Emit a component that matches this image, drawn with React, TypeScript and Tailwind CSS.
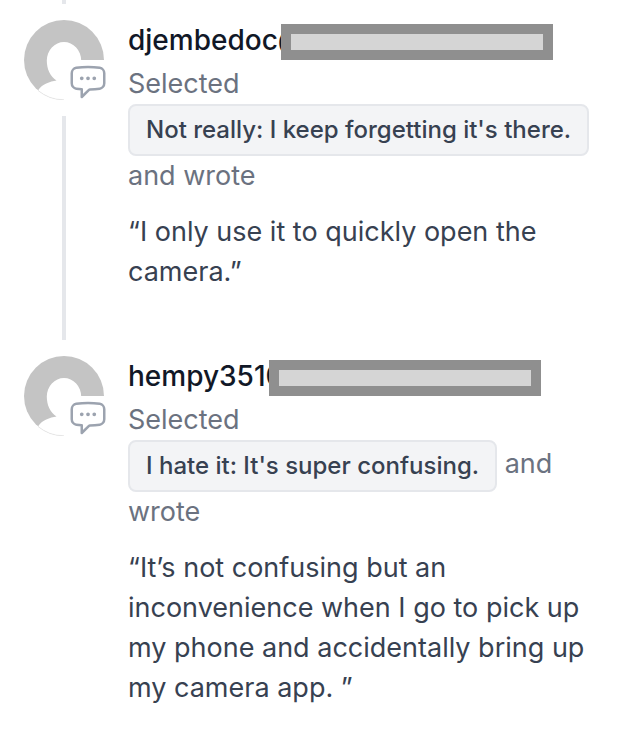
import { HiOutlineChatBubbleLeftEllipsis } from "react-icons/hi2";

type Response = {
  name: string;
  answer: string;
  comment: string;
};

const responses: Response[] = [
  {
    name: "djembedoc@",
    answer: "Not really: I keep forgetting it's there.",
    comment: "“I only use it to quickly open the camera.”",
  },
  {
    name: "hempy351@",
    answer: "I hate it: It's super confusing.",
    comment:
      "“It’s not confusing but an inconvenience when I go to pick up my phone and accidentally bring up my camera app. ”",
  },
];

function Avatar() {
  return (
    <div className="relative size-20 shrink-0">
      <svg viewBox="0 0 80 80" className="size-20" aria-hidden="true">
        <defs>
          <clipPath id="avatar-circle">
            <circle cx="40" cy="40" r="40" />
          </clipPath>
        </defs>
        <g clipPath="url(#avatar-circle)">
          <rect width="80" height="80" fill="#c4c4c4" />
          <path
            d="M40 22A17.200 18.500 0 0 1 57.200 40.500C57.200 49 54 56 48 60V63C56 65 65 66 68 74L60 80H20L14 70.500C18 64 26 61.500 32.500 60.500C26 56 22.800 49 22.800 40.500A17.200 18.500 0 0 1 40 22Z"
            fill="#fff"
          />
        </g>
        <path
          d="M14 70.500A40 40 0 0 0 40 79.700"
          fill="none"
          stroke="#dedede"
          strokeWidth="0.6"
        />
      </svg>
      {/* Comment badge */}
      <span className="absolute -right-2 -bottom-1 rounded-tl bg-white px-1 py-0.5">
        <HiOutlineChatBubbleLeftEllipsis
          className="size-10 text-[#9ca3af]"
          aria-hidden="true"
        />
      </span>
    </div>
  );
}

function FeedItem({ item, isLast }: { item: Response; isLast: boolean }) {
  return (
    <li className="flex gap-6">
      <div className="flex flex-col items-center gap-4">
        <Avatar />
        {!isLast && <span className="mb-4 w-1 flex-1 bg-[#e5e7eb]" />}
      </div>

      <div className={isLast ? "min-w-0 flex-1" : "min-w-0 flex-1 pb-16"}>
        <div className="flex h-10 items-center text-[28px]">
          <span className="font-medium text-[#111827]">{item.name}</span>
          {/* Redacted part of the address */}
          <span className="relative -ml-6 mt-1 h-9 w-68 border-10 border-[#8f8f8f] bg-[#d5d5d5]" />
        </div>
        <p className="mt-1 text-[#6b7280]">
          <span className="block">Selected</span>
          <span className="inline-flex h-13 items-center rounded-lg border-2 border-[#e5e7eb] bg-[#f3f4f6] px-4 align-middle text-2xl font-medium text-[#374151]">
            {item.answer}
          </span>{" "}
          and wrote
        </p>
        <p className="mt-4 text-[#374151]">{item.comment}</p>
      </div>
    </li>
  );
}

export default function App() {
  return (
    <main className="bg-white px-6 font-['Inter',sans-serif] text-[27px] leading-10">
      <div className="mb-4 flex w-20 justify-center">
        <span className="h-1 w-1 bg-[#e5e7eb]" />
      </div>
      <ul>
        {responses.map((item, idx) => (
          <FeedItem
            key={item.name}
            item={item}
            isLast={idx === responses.length - 1}
          />
        ))}
      </ul>
    </main>
  );
}
